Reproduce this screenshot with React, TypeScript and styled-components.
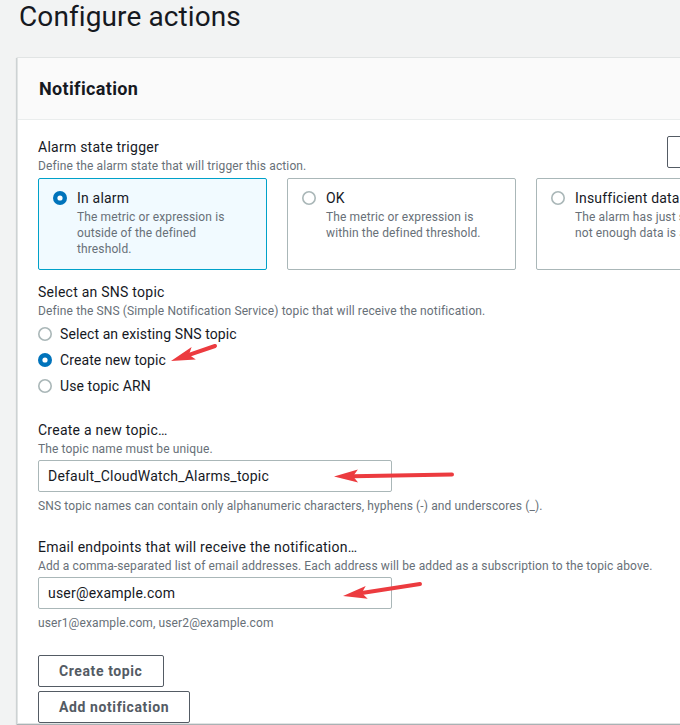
import React from "react";
import styled, { createGlobalStyle } from "styled-components";

const GlobalStyle = createGlobalStyle`
  html, body {
    margin: 0;
    padding: 0;
    background: #f2f3f3;
    overflow: hidden;
  }
  body {
    font-family: Roboto, "Noto Sans", "Liberation Sans", sans-serif;
    color: #16191f;
  }
  * { box-sizing: border-box; }
`;

const Page = styled.div`
  position: relative;
  width: 680px;
  height: 725px;
  overflow: hidden;
  padding: 0 0 0 17px;
`;

const Title = styled.h1`
  margin: 0 0 23px 2px;
  font-size: 28px;
  line-height: 34px;
  font-weight: 400;
  letter-spacing: 0.1px;
  color: #16191f;
`;

const Panel = styled.section`
  width: 767px;
  background: #ffffff;
  border: 1px solid #e1e4e4;
  border-right: none;
  box-shadow: 0 1px 1px 0 rgba(0, 28, 36, 0.2), -1px 1px 1px 0 rgba(0, 28, 36, 0.12);
`;

const PanelHeader = styled.header`
  background: #fafafa;
  border-bottom: 1px solid #eaeded;
  height: 62px;
  display: flex;
  align-items: center;
  padding: 0 21px;
`;

const PanelTitle = styled.h2`
  margin: 0;
  font-size: 18px;
  line-height: 22px;
  font-weight: 700;
  letter-spacing: 0.35px;
`;

const PanelBody = styled.div`
  padding: 16px 20px 0 20px;
  display: flex;
  flex-direction: column;
`;

const Field = styled.div<{ $top?: number }>`
  display: flex;
  flex-direction: column;
  margin-top: ${(p) => p.$top ?? 0}px;
`;

const FieldHead = styled.div`
  display: flex;
  justify-content: space-between;
  align-items: flex-start;
`;

const Label = styled.div`
  font-size: 14px;
  line-height: 22px;
  letter-spacing: 0.25px;
  color: #16191f;
`;

const Description = styled.div`
  font-size: 12px;
  line-height: 16px;
  letter-spacing: 0.12px;
  color: #687078;
`;

const Hint = styled(Description)`
  margin-top: 6px;
`;

const Tiles = styled.div`
  display: grid;
  grid-template-columns: repeat(3, 229px);
  gap: 20px;
  margin-top: 4px;
`;

const Tile = styled.div<{ $selected?: boolean }>`
  display: flex;
  gap: 10px;
  padding: 8px 14px 12px 14px;
  border: 1px solid ${(p) => (p.$selected ? "#00a1c9" : "#aab7b8")};
  background: ${(p) => (p.$selected ? "#f1faff" : "#ffffff")};
  border-radius: 2px;
`;

const TileText = styled.div`
  display: flex;
  flex-direction: column;
  padding-right: 4px;
  color: #687078;
`;

const TileLabel = styled.div`
  font-size: 14px;
  line-height: 22px;
  letter-spacing: 0.2px;
  color: #16191f;
`;

const RadioMark = styled.span`
  flex: none;
  width: 14px;
  height: 22px;
  display: flex;
  align-items: center;
`;

const RadioList = styled.div`
  display: flex;
  flex-direction: column;
  gap: 4px;
  margin-top: 4px;
`;

const RadioRow = styled.label`
  display: flex;
  gap: 8px;
  font-size: 14px;
  line-height: 22px;
  letter-spacing: 0.1px;
  color: #16191f;
`;

const TextInput = styled.div`
  margin-top: 3px;
  width: 354px;
  height: 32px;
  border: 1px solid #aab7b8;
  border-radius: 2px;
  background: #fff;
  padding: 0 9px;
  display: flex;
  align-items: center;
  font-size: 14px;
  letter-spacing: 0.2px;
  color: #16191f;
`;

const Buttons = styled.div`
  display: flex;
  flex-direction: column;
  align-items: flex-start;
  gap: 4px;
  margin-top: 24px;
`;

const Button = styled.button`
  height: 32px;
  padding: 0 20px;
  border: 1px solid #545b64;
  border-radius: 2px;
  background: #ffffff;
  color: #545b64;
  font-family: inherit;
  font-size: 14px;
  font-weight: 700;
  letter-spacing: 0.6px;
  line-height: 20px;
`;

const Overlay = styled.svg`
  position: absolute;
  left: 0;
  top: 0;
  pointer-events: none;
`;

const Radio = ({ checked }: { checked?: boolean }) => (
  <RadioMark>
    <svg width="14" height="14" viewBox="0 0 14 14">
      {checked ? (
        <>
          <circle cx="7" cy="7" r="7" fill="#0073bb" />
          <circle cx="7" cy="7" r="2.6" fill="#ffffff" />
        </>
      ) : (
        <circle cx="7" cy="7" r="6.2" fill="#ffffff" stroke="#aab7b8" strokeWidth="1.6" />
      )}
    </svg>
  </RadioMark>
);

const Arrow = ({ x1, y1, x2, y2 }: { x1: number; y1: number; x2: number; y2: number }) => {
  const dx = x2 - x1;
  const dy = y2 - y1;
  const len = Math.hypot(dx, dy);
  const ux = dx / len;
  const uy = dy / len;
  const headLen = 24;
  const headW = 6.5;
  const bx = x2 - ux * headLen;
  const by = y2 - uy * headLen;
  const nx = -uy;
  const ny = ux;
  const mx = x2 - ux * (headLen - 5);
  const my = y2 - uy * (headLen - 5);
  const pts = [
    [x2, y2],
    [bx + nx * headW, by + ny * headW],
    [mx, my],
    [bx - nx * headW, by - ny * headW],
  ]
    .map((p) => p.join(","))
    .join(" ");
  return (
    <g>
      <line x1={x1} y1={y1} x2={mx} y2={my} stroke="#ec3b3f" strokeWidth="4" strokeLinecap="round" />
      <polygon points={pts} fill="#ec3b3f" />
    </g>
  );
};

const tiles = [
  { label: "In alarm", desc: "The metric or expression is outside of the defined threshold.", selected: true },
  { label: "OK", desc: "The metric or expression is within the defined threshold." },
  { label: "Insufficient data", desc: "The alarm has just started or not enough data is available." },
];

const topics = [
  { label: "Select an existing SNS topic" },
  { label: "Create new topic", checked: true },
  { label: "Use topic ARN" },
];

export default function App() {
  return (
    <Page>
      <GlobalStyle />
      <Title>Configure actions</Title>
      <Panel>
        <PanelHeader>
          <PanelTitle>Notification</PanelTitle>
        </PanelHeader>
        <PanelBody>
          <Field>
            <FieldHead>
              <div>
                <Label>Alarm state trigger</Label>
                <Description>Define the alarm state that will trigger this action.</Description>
              </div>
              <Button>Remove</Button>
            </FieldHead>
            <Tiles>
              {tiles.map((t) => (
                <Tile key={t.label} $selected={t.selected}>
                  <Radio checked={t.selected} />
                  <TileText>
                    <TileLabel>{t.label}</TileLabel>
                    <Description>{t.desc}</Description>
                  </TileText>
                </Tile>
              ))}
            </Tiles>
          </Field>

          <Field $top={11}>
            <Label>Select an SNS topic</Label>
            <Description>
              Define the SNS (Simple Notification Service) topic that will receive the notification.
            </Description>
            <RadioList>
              {topics.map((t) => (
                <RadioRow key={t.label}>
                  <Radio checked={t.checked} />
                  {t.label}
                </RadioRow>
              ))}
            </RadioList>
          </Field>

          <Field $top={22}>
            <Label>Create a new topic…</Label>
            <Description>The topic name must be unique.</Description>
            <TextInput>Default_CloudWatch_Alarms_topic</TextInput>
            <Hint>SNS topic names can contain only alphanumeric characters, hyphens (-) and underscores (_).</Hint>
          </Field>

          <Field $top={22}>
            <Label>Email endpoints that will receive the notification…</Label>
            <Description>
              Add a comma-separated list of email addresses. Each address will be added as a subscription to the topic above.
            </Description>
            <TextInput>user@example.com</TextInput>
            <Hint>user1@example.com, user2@example.com</Hint>
          </Field>

          <Buttons>
            <Button>Create topic</Button>
            <Button>Add notification</Button>
          </Buttons>
        </PanelBody>
      </Panel>
      <Overlay width="680" height="725" viewBox="0 0 680 725">
        <Arrow x1={215} y1={346} x2={171} y2={361} />
        <Arrow x1={452} y1={474.5} x2={334} y2={476.5} />
        <Arrow x1={420} y1={584} x2={343} y2={596} />
      </Overlay>
    </Page>
  );
}
